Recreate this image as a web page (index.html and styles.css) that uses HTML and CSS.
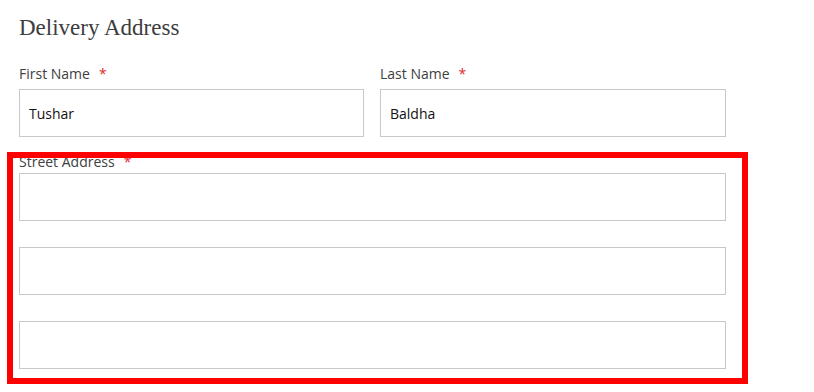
FILE: index.html
```html
<!DOCTYPE html>
<html>

<head>
  <title>Delivery Address</title>
  <link rel="stylesheet" href="styles.css">
</head>

<body>
  <div class="container">
    <h1 class="title">Delivery Address</h1>

    <div class="row">
      <div class="field">
        <label for="firstname" class="required">First Name</label>
        <input type="text" id="firstname" value="Tushar">
      </div>
      <div class="field">
        <label for="lastname" class="required">Last Name</label>
        <input type="text" id="lastname" value="Baldha">
      </div>
    </div>

    <div class="field street highlight">
      <label for="street0" class="required">Street Address</label>
      <input type="text" id="street0">
      <input type="text" id="street1">
      <input type="text" id="street2">
    </div>
  </div>
</body>

</html>
```

FILE: styles.css
```css
body {
  margin: 0;
  padding: 0;
  background: #fff;
  font-family: "Open Sans", Arial, sans-serif;
}

.container {
  width: 707px;
  padding: 13px 0 23px 19px;
}

.title {
  margin: 0 0 21px;
  font-family: "Liberation Serif", "Times New Roman", serif;
  font-weight: normal;
  font-size: 23px;
  line-height: 30px;
  color: #3d3d3d;
}

.row {
  display: grid;
  grid-template-columns: 345px 346px;
  column-gap: 16px;
}

.field {
  display: flex;
  flex-direction: column;
}

label {
  display: block;
  font-size: 14px;
  line-height: 20px;
  color: #404040;
  margin-bottom: 5px;
}

label.required::after {
  content: "*";
  color: #e02b27;
  margin-left: 9px;
}

input {
  box-sizing: border-box;
  width: 100%;
  height: 48px;
  margin: 0;
  padding: 0 9px;
  border: 1px solid #c8c8c8;
  border-radius: 0;
  font-family: "Open Sans", Arial, sans-serif;
  font-size: 14px;
  color: #111;
  background: #fff;
}

.street {
  margin-top: 15px;
  gap: 26px;
}

.street label {
  margin-bottom: -25px;
}

.highlight {
  position: relative;
}

.highlight::after {
  content: "";
  position: absolute;
  top: 0;
  left: -12px;
  right: -22px;
  bottom: -15px;
  border: 6px solid #ff0000;
  pointer-events: none;
}
```
